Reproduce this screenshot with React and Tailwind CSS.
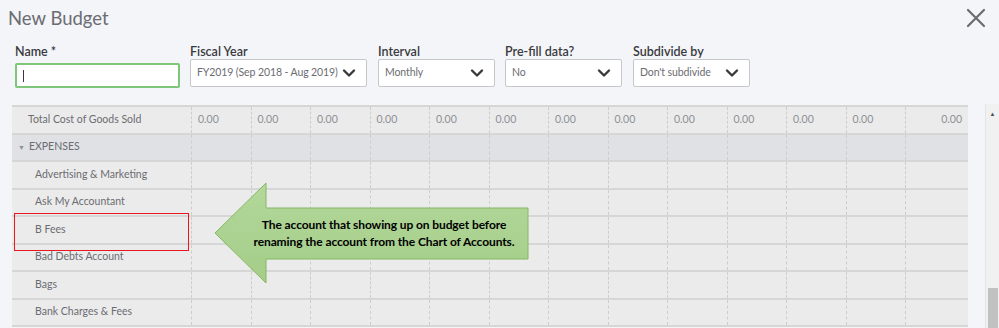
import React from "react";

const months = Array.from({ length: 12 }, (_, i) => i);

const rows = [
  { label: "Total Cost of Goods Sold", indent: "pl-[16px]", values: true },
  { label: "EXPENSES", indent: "pl-[6px]", section: true },
  { label: "Advertising & Marketing", indent: "pl-[23px]" },
  { label: "Ask My Accountant", indent: "pl-[23px]" },
  { label: "B Fees", indent: "pl-[23px]" },
  { label: "Bad Debts Account", indent: "pl-[23px]" },
  { label: "Bags", indent: "pl-[23px]" },
  { label: "Bank Charges & Fees", indent: "pl-[23px]" },
];

function Chevron() {
  return (
    <svg width="14" height="10" viewBox="0 0 14 10" className="shrink-0">
      <path d="M2 2.5 L7 7.5 L12 2.5" fill="none" stroke="#393a3d" strokeWidth="2.4" strokeLinecap="round" strokeLinejoin="round" />
    </svg>
  );
}

function Field({ label, value, width, className = "" }) {
  return (
    <div className={`flex flex-col ${className}`} style={{ width }}>
      <div className="text-[12.5px] leading-[14px] text-[#393a3d] font-semibold whitespace-nowrap">
        {label}
      </div>
      <div className="h-[28px] bg-white border border-[#c6c7cb] rounded-[2px] flex items-center justify-between pl-[6px] pr-[10px]">
        <span className="text-[10.5px] tracking-[-0.1px] text-[#6b6c72] whitespace-nowrap">{value}</span>
        <Chevron />
      </div>
    </div>
  );
}

function Row({ row }) {
  const bg = row.section ? "bg-[#e0e1e5]" : "bg-[#ebebeb]";
  return (
    <div className={`flex h-[27.5px] border-b-2 border-[#d6d6d6] ${bg}`}>
      <div
        className={`w-[180px] shrink-0 flex items-center ${row.indent} border-r border-dashed border-[#cdcdcd] text-[10.5px] text-[#6b6c72] whitespace-nowrap`}
      >
        {row.section && <span className="text-[7px] mr-[4px] text-[#8d9096]">▼</span>}
        {row.label}
      </div>
      {months.map((m) => (
        <div
          key={m}
          className="w-[59.5px] shrink-0 flex items-center pl-[6px] border-r border-dashed border-[#cdcdcd] text-[10.5px] text-[#8d9096]"
        >
          {row.values ? "0.00" : ""}
        </div>
      ))}
      <div className="flex-1 flex items-center justify-end pr-[6px] text-[10.5px] text-[#8d9096]">
        {row.values ? "0.00" : ""}
      </div>
    </div>
  );
}

export default function App() {
  return (
    <div
      className="w-[999px] h-[328px] overflow-hidden bg-[#f4f5f8] relative"
      style={{ fontFamily: "Lato, 'Open Sans', sans-serif" }}
    >
      {/* header */}
      <div className="flex items-start justify-between h-[40px] pl-[8px] pr-[13px] pt-[6px]">
        <h1 className="text-[18.5px] leading-[24px] text-[#6b6c72] font-normal">New Budget</h1>
        <svg width="20" height="20" viewBox="0 0 20 20" className="mt-[2px]">
          <path d="M2 2 L18 18 M18 2 L2 18" stroke="#6b6c72" strokeWidth="2.2" strokeLinecap="round" />
        </svg>
      </div>

      {/* form */}
      <div className="flex items-end pl-[15px] h-[48px]">
        <div className="flex flex-col w-[165px] mr-[10px]">
          <div className="text-[12.5px] leading-[14px] text-[#393a3d] font-semibold mb-[4px]">Name *</div>
          <div className="h-[25px] bg-white border-2 border-[#7dc67a] rounded-[2px] flex items-center pl-[6px]">
            <span className="w-px h-[12px] bg-[#393a3d]" />
          </div>
        </div>
        <Field label="Fiscal Year" value="FY2019 (Sep 2018 - Aug 2019)" width={177} className="mr-[11px] mb-[1px]" />
        <Field label="Interval" value="Monthly" width={117} className="mr-[10px] mb-[1px]" />
        <Field label="Pre-fill data?" value="No" width={117} className="mr-[11px] mb-[1px]" />
        <Field label="Subdivide by" value="Don't subdivide" width={117} className="mb-[1px]" />
      </div>

      {/* table + scrollbar */}
      <div className="flex mt-[16px]">
        <div className="relative ml-[12px] mt-[1px] w-[956px] border-t-2 border-[#d6d6d6]">
          {rows.map((r) => (
            <Row key={r.label} row={r} />
          ))}

          {/* highlight box */}
          <div className="absolute left-[2px] top-[106px] w-[175px] h-[38px] border border-[#e8171d]" />

          {/* callout */}
          <div className="absolute left-[202px] top-[75px] w-[318px] h-[102px]">
            <svg width="318" height="102" viewBox="0 0 318 102" className="absolute inset-0">
              <defs>
                <linearGradient id="g" x1="0" y1="0" x2="0" y2="1">
                  <stop offset="0" stopColor="#b3d89b" />
                  <stop offset="1" stopColor="#a4cd88" />
                </linearGradient>
              </defs>
              <polygon
                points="1,51 52,1 52,26 314,26 314,77 52,77 52,101"
                fill="url(#g)"
                stroke="#84b863"
                strokeWidth="1"
              />
            </svg>
            <div className="absolute left-[33px] top-[25px] w-[274px] h-[51px] flex flex-col items-center justify-center text-[12px] leading-[17px] font-bold text-black text-center whitespace-nowrap tracking-[-0.1px]">
              <div>The account that showing up on budget before</div>
              <div>renaming the account from the Chart of Accounts.</div>
            </div>
          </div>
        </div>

        <div className="ml-[17px] w-[14px] h-[230px] bg-[#f1f1f1] border-l border-[#e4e4e4] flex flex-col items-center">
          <span className="text-[6px] text-[#505050] mt-[5px]">▲</span>
          <div className="mt-auto w-[10px] h-[46px] bg-[#c1c1c1]" />
        </div>
      </div>
    </div>
  );
}
